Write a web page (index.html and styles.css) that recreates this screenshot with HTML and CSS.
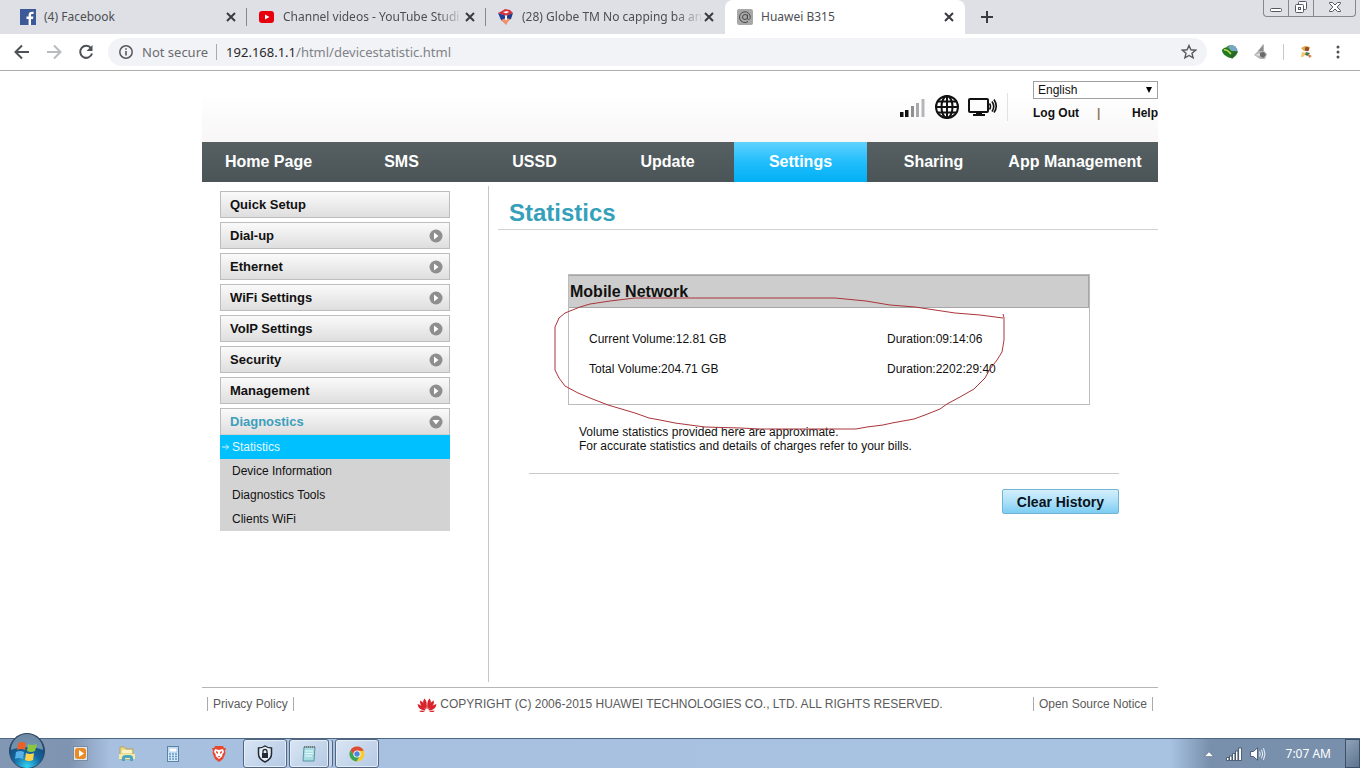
FILE: index.html
```html
<!DOCTYPE html>
<html lang="en">
<head>
<meta charset="utf-8">
<title>Huawei B315</title>
<link rel="stylesheet" href="styles.css">
</head>
<body>
<div class="tabstrip">
  <div class="tab">
    <svg class="favicon" width="16" height="16" viewBox="0 0 16 16"><rect width="16" height="16" fill="#3c5a98"/><path d="M11 16V10h2l.4-2.4H11V6.200c0-.8.4-1.300 1.300-1.300h1.300V2.800c-3-.6-5 .5-5 3.100v1.700H6.500V10h2.100v6z" fill="#fff"/></svg>
    <span class="tab-title">(4) Facebook</span>
    <button class="tab-close" aria-label="Close tab"><svg width="10" height="10" viewBox="0 0 10 10"><path d="M1 1l8 8M9 1l-8 8"/></svg></button>
  </div>
  <div class="tab">
    <svg class="favicon" width="16" height="16" viewBox="0 0 16 16"><rect y="2" width="15" height="12" rx="3" fill="#e8000c"/><path d="M6 5.500v5L10.500 8z" fill="#fff"/></svg>
    <span class="tab-title fade">Channel videos - YouTube Studi</span>
    <button class="tab-close" aria-label="Close tab"><svg width="10" height="10" viewBox="0 0 10 10"><path d="M1 1l8 8M9 1l-8 8"/></svg></button>
  </div>
  <div class="tab">
    <svg class="favicon" width="16" height="16" viewBox="0 0 16 16"><path d="M0 4l4-2 3-2 5 1 3 3-7 3z" fill="#d6303a"/><path d="M0 4l7 2.500L7.500 14 3 11z" fill="#1f3d9a"/><path d="M15 4L9 6.500 9 12l4-2z" fill="#243c86"/><path d="M3 11l5-2 4 1-4 6z" fill="#f0906c"/><path d="M5 3l4-1 2 1-3 1.500z" fill="#fff"/><path d="M7 6.500h2V11H7z" fill="#f4f4fa"/></svg>
    <span class="tab-title fade">(28) Globe TM No capping ba an</span>
    <button class="tab-close" aria-label="Close tab"><svg width="10" height="10" viewBox="0 0 10 10"><path d="M1 1l8 8M9 1l-8 8"/></svg></button>
  </div>
  <div class="tab tab-active">
    <svg class="favicon" width="16" height="16" viewBox="0 0 16 16"><rect width="16" height="16" rx="2" fill="#a8a8a8"/><g fill="none" stroke="#484848"><circle cx="8" cy="8" r="2.500"/><path d="M10.500 5.500v4c0 1.500 2.500 1.500 2.800-1A5.400 5.400 0 1 0 11 12.600"/></g></svg>
    <span class="tab-title">Huawei B315</span>
    <button class="tab-close" aria-label="Close tab"><svg width="10" height="10" viewBox="0 0 10 10"><path d="M1 1l8 8M9 1l-8 8"/></svg></button>
  </div>
  <button class="new-tab" aria-label="New tab"><svg width="12" height="12" viewBox="0 0 12 12"><path d="M6 0v12M0 6h12" stroke="#3a3b40" stroke-width="2"/></svg></button>
  <div class="window-controls">
    <button aria-label="Minimize"><svg width="14" height="14" viewBox="0 0 14 14"><rect x="1.500" y="8.500" width="11" height="3" rx="1" fill="#fff" stroke="#555664"/></svg></button>
    <button aria-label="Restore"><svg width="14" height="14" viewBox="0 0 14 14"><g fill="#fff" stroke="#555664"><rect x="4.500" y="1.500" width="8" height="8" rx="1"/><rect x="1.500" y="4.500" width="8" height="8" rx="1"/><rect x="4.500" y="7.500" width="2" height="2"/></g></svg></button>
    <button class="window-close" aria-label="Close"><svg width="14" height="14" viewBox="0 0 14 14"><path d="M1.500 2.500h3L7 5l2.500-2.500h3v1L9.200 7l3.300 3.500v1h-3L7 9l-2.500 2.500h-3v-1L4.800 7 1.500 3.500z" fill="#fff" stroke="#555664"/></svg></button>
  </div>
</div>

<div class="toolbar">
  <button class="tool" aria-label="Back"><svg width="16" height="16" viewBox="0 0 16 16"><path d="M15 8H2M8 1.500L1.500 8 8 14.500" stroke="#4e5155"/></svg></button>
  <button class="tool" aria-label="Forward"><svg width="16" height="16" viewBox="0 0 16 16"><path d="M1 8h13M8 1.500L14.500 8 8 14.500" stroke="#b9bbbe"/></svg></button>
  <button class="tool" aria-label="Reload"><svg width="16" height="16" viewBox="0 0 16 16"><path d="M13 4.200A6 6 0 1 0 14 9.500" stroke="#4e5155"/><path d="M14.500 1v6h-6z" fill="#4e5155" stroke="none"/></svg></button>
  <div class="omnibox">
    <svg width="16" height="16" viewBox="0 0 16 16"><circle cx="8" cy="8" r="6.200" fill="none" stroke="#55585c" stroke-width="1.500"/><path d="M8 7v4.500M8 4.200v1.600" stroke="#55585c" stroke-width="1.600"/></svg>
    <span class="security">Not secure</span>
    <span class="url"><b>192.168.1.1</b>/html/devicestatistic.html</span>
    <button class="star" aria-label="Bookmark"><svg width="16" height="16" viewBox="0 0 16 16"><path d="M8 1.500l1.900 4.300 4.700.4-3.600 3.100 1.100 4.600L8 11.500l-4.100 2.400L5 9.300 1.400 6.200l4.700-.4z" fill="none" stroke="#55585c" stroke-width="1.400"/></svg></button>
  </div>
  <div class="extensions">
    <svg width="18" height="16" viewBox="0 0 18 16"><circle cx="10" cy="7.500" r="6.500" fill="#4d9440"/><path d="M8 1.300a6.500 6.500 0 0 1 8.500 6.200L12 9 8 4z" fill="#7aa6c6"/><path d="M1 6c3-4 6-3 9 1l5 0-4 7C5 13 1 10 1 6z" fill="#207a24"/><path d="M3 6c3-1 4 1 7 4" stroke="#c8dc50" stroke-width="1.500" fill="none"/><path d="M9 12l6-5 2 1-6 7z" fill="#2b6426"/></svg>
    <svg width="16" height="16" viewBox="0 0 16 16"><path d="M10 0l1 1v6l3 3-2 5H7L1 11l4-4z" fill="#b4b4b4"/><path d="M10 2v5H5z" fill="#8a8a8a"/><path d="M6 9l5-1 2 3-3 3-3-2z" fill="#6a6a6a"/><path d="M2 11l5-2v3z" fill="#e0e0e0"/></svg>
    <i class="divider"></i>
    <svg width="16" height="16" viewBox="0 0 16 16"><path d="M3 4l4-2 5 1-1 3-5 1z" fill="#e0aa48"/><circle cx="9" cy="5" r="2.200" fill="#9c4a2c"/><path d="M4 8l5 1-4 4H3z" fill="#f0c868"/><path d="M8 8l4 1-2 3-3-1z" fill="#4a7850"/><path d="M10 10l4 2-3 2z" fill="#d87840"/></svg>
    <button class="tool" aria-label="Menu"><svg width="4" height="16" viewBox="0 0 4 16"><g fill="#4e5155" stroke="none"><circle cx="2" cy="3" r="1.500"/><circle cx="2" cy="8" r="1.500"/><circle cx="2" cy="13" r="1.500"/></g></svg></button>
  </div>
</div>

<div class="page">
  <header class="header">
    <div class="status">
      <svg width="26" height="20" viewBox="0 0 26 20"><path d="M0 15h3.500v5H0zM5 13h3.500v7H5z" fill="#111"/><path d="M11 9h3v11h-3z" fill="#8f8f93"/><path d="M16 6h3v14h-3z" fill="#a9a9ad"/><path d="M21.500 2h3v18h-3z" fill="#b6b6ba"/></svg>
      <svg width="26" height="26" viewBox="0 0 26 26"><g fill="none" stroke="#111" stroke-width="2"><circle cx="13" cy="13" r="11"/><ellipse cx="13" cy="13" rx="5.500" ry="11"/><path d="M13 2v22M2 13h22M4 7.500h18M4 18.500h18"/></g></svg>
      <svg width="30" height="20" viewBox="0 0 30 20"><g fill="none" stroke="#111"><rect x="1" y="2" width="19" height="13" rx="1" stroke-width="2"/><path d="M21.500 6.500q2 3 0 6M24 4.500q3.500 5 0 10M26 2.500q4.500 7 0 13" stroke-width="1.600"/></g><path d="M8 15h6v2h3v2H5v-2h3z" fill="#111"/></svg>
    </div>
    <div class="account">
      <label class="language"><select aria-label="Language"><option>English</option></select></label>
      <div class="account-links"><a href="#">Log Out</a><span class="bar">|</span><a href="#">Help</a></div>
    </div>
  </header>

  <nav class="nav">
    <a href="#">Home Page</a><a href="#">SMS</a><a href="#">USSD</a><a href="#">Update</a><a href="#" class="current">Settings</a><a href="#">Sharing</a><a href="#" class="wide">App Management</a>
  </nav>

  <div class="body">
    <aside class="sidebar">
      <a class="menu" href="#">Quick Setup</a>
      <a class="menu" href="#">Dial-up<svg class="arrow" width="14" height="14" viewBox="0 0 14 14"><circle cx="7" cy="7" r="6.500"/><path d="M5 3.500v7L9.500 7z"/></svg></a>
      <a class="menu" href="#">Ethernet<svg class="arrow" width="14" height="14" viewBox="0 0 14 14"><circle cx="7" cy="7" r="6.500"/><path d="M5 3.500v7L9.500 7z"/></svg></a>
      <a class="menu" href="#">WiFi Settings<svg class="arrow" width="14" height="14" viewBox="0 0 14 14"><circle cx="7" cy="7" r="6.500"/><path d="M5 3.500v7L9.500 7z"/></svg></a>
      <a class="menu" href="#">VoIP Settings<svg class="arrow" width="14" height="14" viewBox="0 0 14 14"><circle cx="7" cy="7" r="6.500"/><path d="M5 3.500v7L9.500 7z"/></svg></a>
      <a class="menu" href="#">Security<svg class="arrow" width="14" height="14" viewBox="0 0 14 14"><circle cx="7" cy="7" r="6.500"/><path d="M5 3.500v7L9.500 7z"/></svg></a>
      <a class="menu" href="#">Management<svg class="arrow" width="14" height="14" viewBox="0 0 14 14"><circle cx="7" cy="7" r="6.500"/><path d="M5 3.500v7L9.500 7z"/></svg></a>
      <div class="group">
        <a class="menu open" href="#">Diagnostics<svg class="arrow" width="14" height="14" viewBox="0 0 14 14"><circle cx="7" cy="7" r="6.500"/><path d="M3.500 5h7L7 9.500z"/></svg></a>
        <div class="submenu">
          <a href="#" class="selected"><svg width="8" height="8" viewBox="0 0 8 8"><path d="M0 4h6.500M4 1.500L6.500 4 4 6.500" fill="none" stroke="#d8f4ff"/></svg>Statistics</a>
          <a href="#">Device Information</a>
          <a href="#">Diagnostics Tools</a>
          <a href="#">Clients WiFi</a>
        </div>
      </div>
    </aside>

    <main class="content">
      <h1>Statistics</h1>
      <section class="panel">
        <h2>Mobile Network</h2>
        <table>
          <tr><td>Current Volume:12.81 GB</td><td>Duration:09:14:06</td></tr>
          <tr><td>Total Volume:204.71 GB</td><td>Duration:2202:29:40</td></tr>
        </table>
        <svg class="pen" width="452" height="136" viewBox="554 296 452 136"><path d="M1003 314l1 4v22l-2 12-5 8-7 9-5 9-11 11-14 8-13 7-7 5-15 6-11 4-22 4-9 2-16 2-11 2h-96l-20-1-35-1-15-2-15-2-15-3-11-2-14-5-27-8-18-7-12-5-13-7-6-8-4-8v-43l4-9 6-5 15-6 10-3 20-3 25-3h200l31 3 24 4 25 2 20 3 20 3 25 2 23 3"/></svg>
      </section>
      <p class="note">Volume statistics provided here are approximate.<br>For accurate statistics and details of charges refer to your bills.</p>
      <div class="actions"><button class="clear">Clear History</button></div>
    </main>
  </div>

  <footer class="footer">
    <a href="#">Privacy Policy</a>
    <span class="copyright"><svg width="20" height="16" viewBox="0 0 20 16"><g fill="#d8232a"><path d="M9.600 12C6 9 5 4.500 7.500 1.500 9.800 4 10 7 9.600 12z"/><path d="M10.400 12C10 7 10.200 4 12.500 1.500c2.500 3 1.500 7.500-2.100 10.500z"/><path d="M9 12.200C5 11 2.300 7 3.300 3.500 6.500 5 8.500 8.500 9 12.200z"/><path d="M11 12.200c.5-3.700 2.500-7.200 5.700-8.700 1 3.500-1.700 7.500-5.700 8.700z"/><path d="M8.500 13C4 13.500.8 11 .6 7 4 8 7.500 10 8.500 13z"/><path d="M11.500 13c1-3 4.500-5 7.900-6-.2 4-3.400 6.500-7.900 6z"/><path d="M8.500 13.500c-2 2-5 2-6.500.2zM11.500 13.500c2 2 5 2 6.500.2z"/></g></svg>COPYRIGHT (C) 2006-2015 HUAWEI TECHNOLOGIES CO., LTD. ALL RIGHTS RESERVED.</span>
    <a href="#">Open Source Notice</a>
  </footer>
</div>

<div class="taskbar">
  <button class="orb" aria-label="Start"><svg width="38" height="38" viewBox="0 0 38 38"><defs><radialGradient id="orb" cx=".5" cy=".95" r=".9"><stop offset="0" stop-color="#35d4f4"/><stop offset=".45" stop-color="#1467a0"/><stop offset="1" stop-color="#173a60"/></radialGradient></defs><circle cx="19" cy="19" r="17.500" fill="url(#orb)" stroke="#2d4763"/><path d="M3 18a16 16 0 0 1 32 0c-9-4-23-4-32 0z" fill="#b9cbd8" opacity=".55"/><path d="M10 11q4-2 8 0l-1 7q-4-2-8 0z" fill="#e8622c"/><path d="M20 12q4 2 9 0l-2 7q-4 2-8 0z" fill="#8cc63e"/><path d="M8 20q4-2 8 0l-1 7q-4-2-8 0z" fill="#58b2e8"/><path d="M18 21q4 2 8 0l-1 7q-4 2-8 0z" fill="#ffd24a"/></svg></button>
  <div class="pinned">
    <svg width="18" height="18" viewBox="0 0 18 18"><rect x="1.500" y="1.500" width="14" height="14" fill="#dde6ee" stroke="#7b8ca0"/><rect x="3" y="3" width="11" height="11" rx="3" fill="#e98a24"/><path d="M7 5v7l5-3.500z" fill="#fff"/></svg>
    <svg width="18" height="18" viewBox="0 0 18 18"><path d="M2 2h5l1 2h7v10H2z" fill="#e8d98b" stroke="#b7a75c"/><path d="M4 5h10v3H4z" fill="#f8f3cc"/><path d="M1 9h16v5H1z" fill="#f4eaa6"/><path d="M4 16v-3q0-3 4-3h3q4 0 4 3v3h-3v-3H7v3z" fill="#4ca4c4"/></svg>
    <svg width="18" height="18" viewBox="0 0 18 18"><rect x="3.500" y="1.500" width="11" height="15" fill="#d5e8f6" stroke="#5b83a8"/><rect x="5" y="3" width="8" height="4" fill="#fff" stroke="#86b3d5" stroke-width=".6"/><path d="M5 9h8M5 11.500h8M5 14h8" stroke="#6398c4" stroke-width="1.500" stroke-dasharray="2 1"/></svg>
    <svg width="18" height="18" viewBox="0 0 18 18"><path d="M5 1h8l1 2h2l-1 3 .5 2-2.500 6-4 3-4-3L2.500 8 3 6 2 3h2z" fill="#e6492f"/><path d="M5 4l4 1 4-1 1 3-2 3 .5 1-3.500 3-3.500-3 .5-1-2-3z" fill="#fff"/><path d="M6 6l2 1v2L6 7.500zM12 6l-2 1v2l2-1.500zM7.500 11h3L9 12.500z" fill="#e6492f"/></svg>
  </div>
  <button class="task" aria-label="VPN"><svg width="18" height="18" viewBox="0 0 18 18"><path d="M9 1q3 2 6.500 2v6q0 5-6.500 8-6.500-3-6.500-8V3Q6 3 9 1z" fill="#e8eef5" stroke="#222b36" stroke-width="1.500"/><rect x="6" y="8" width="6" height="5" fill="#222b36"/><path d="M7 8V6.500a2 2 0 0 1 4 0V8" fill="none" stroke="#222b36" stroke-width="1.300"/></svg></button>
  <button class="task stacked" aria-label="Notepad"><svg width="18" height="18" viewBox="0 0 18 18"><path d="M4 2h11l-1 14H3z" fill="#a9dde4" stroke="#57949f"/><path d="M5 6h8M5 8.500h8M5 11h7" stroke="#e8fbff"/><path d="M4 2h11" stroke="#777" stroke-width="2" stroke-dasharray="1 1"/></svg></button>
  <button class="task" aria-label="Chrome"><svg width="16" height="16" viewBox="0 0 16 16"><circle cx="8" cy="8" r="7.500" fill="#f7cb36"/><path d="M1.500 4.200A7.500 7.500 0 0 1 14.800 4.800H8L5 9.500z" fill="#dc4a3a"/><path d="M1.500 4.200A7.500 7.500 0 0 0 7.500 15.500l3.300-5.500L5 9.500z" fill="#37a55a"/><circle cx="8" cy="8" r="3.600" fill="#fff"/><circle cx="8" cy="8" r="2.700" fill="#4a86e0"/></svg></button>
  <div class="tray">
    <svg width="10" height="6" viewBox="0 0 10 6"><path d="M.5 5.500h9L5 .8z" fill="#fff" stroke="#5d7086" stroke-width=".6"/></svg>
    <svg width="16" height="14" viewBox="0 0 16 14"><g fill="#fff" stroke="#34465a" stroke-width=".8"><path d="M.5 10.500h2.400v3H.5zM3.500 9h2.400v4.500H3.500zM6.500 6.500h2.400v7H6.500zM9.500 4h2.400v9.500H9.500zM12.600 1h2.900v12.500h-2.900z"/></g></svg>
    <svg width="16" height="14" viewBox="0 0 16 14"><path d="M.6 4.500h2.900L7.500.8v12.400L3.500 9.500H.6z" fill="#fff" stroke="#34465a" stroke-width=".8"/><path d="M9.500 4.500q1.500 2.500 0 5M11.500 2.800q2.500 4.200 0 8.400M13.500 1.200q3 5.800 0 11.600" fill="none" stroke="#eef4fa"/></svg>
    <time>7:07 AM</time>
  </div>
  <button class="show-desktop" aria-label="Show desktop"></button>
</div>
</body>
</html>
```
FILE: styles.css
```css
* { box-sizing: border-box; }
body {
  margin: 0;
  min-height: 100vh;
  display: flex;
  flex-direction: column;
  background: #fff;
  color: #111;
  font: 12px/14px "Liberation Sans", Arial, sans-serif;
}
button { margin: 0; padding: 0; border: 0; background: none; color: inherit; font: inherit; }
a { color: inherit; text-decoration: none; }
svg { display: block; flex: none; }

/* Browser tabs */
.tabstrip {
  display: flex;
  height: 34px;
  padding-left: 8px;
  background: #dfe0e6;
  font: 12px/16px "Noto Sans", "Open Sans", sans-serif;
  color: #4c4e53;
}
.tab {
  display: flex;
  align-items: center;
  justify-content: space-between;
  gap: 8px;
  width: 239px;
  padding: 0 11px 0 12px;
  background: linear-gradient(#888, #888) right center / 1px 18px no-repeat;
}
.tab:nth-child(3) { background: none; }
.tab-active { width: 240px; border-radius: 8px 8px 0 0; background: #fff; }
.tab-title { flex: 1; white-space: nowrap; }
.fade {
  margin-right: -8px;
  -webkit-mask-image: linear-gradient(90deg, #000 84%, transparent);
  mask-image: linear-gradient(90deg, #000 84%, transparent);
}
.tab-close svg { fill: none; stroke: #3a3b40; stroke-width: 2; }
.new-tab { padding: 0 16px; }
.window-controls {
  display: flex;
  height: 17px;
  margin: 0 4px 0 auto;
  border: 1px solid #85868e;
  border-top: 0;
  border-radius: 0 0 4px 4px;
}
.window-controls button { display: flex; justify-content: center; width: 25px; border-right: 1px solid #85868e; }
.window-controls .window-close { width: 41px; border-right: 0; }

/* Address bar */
.toolbar {
  display: flex;
  align-items: center;
  height: 37px;
  padding: 0 20px 0 14px;
  border-bottom: 1px solid #adadad;
  background: #fff;
  font: 13px/20px "Noto Sans", "Open Sans", sans-serif;
}
.tool { margin-right: 16px; }
.tool svg { fill: none; stroke-width: 2; }
.omnibox {
  flex: 1;
  display: flex;
  align-items: center;
  height: 28px;
  margin-left: -2px;
  padding: 0 10px;
  border-radius: 14px;
  background: #f2f3f6;
}
.security { margin-left: 8px; padding-right: 8px; border-right: 1px solid #aaa; line-height: 16px; color: #6a6c70; }
.url { margin-left: 9px; color: #808287; }
.url b { font-weight: 400; color: #26272a; }
.star { margin-left: auto; }
.extensions { display: flex; align-items: center; gap: 14px; margin-left: 14px; }
.extensions .tool { margin: 0 0 0 8px; }
.divider { width: 1px; height: 16px; background: #c8c8c8; }

/* Router page */
.page {
  flex: 1;
  display: flex;
  flex-direction: column;
  width: 100%;
  max-width: 956px;
  margin: 0 auto;
}
.header {
  display: flex;
  justify-content: flex-end;
  height: 71px;
  padding-top: 10px;
  background: linear-gradient(#fff 30%, #f8f6f6);
}
.status {
  display: flex;
  align-items: center;
  gap: 8px;
  height: 28px;
  margin-top: 12px;
  padding-right: 9px;
  border-right: 1px solid #e2e2e2;
}
.account { width: 125px; margin-left: 25px; }
.language { display: block; position: relative; }
.language select {
  display: block;
  width: 100%;
  height: 18px;
  padding: 0 4px;
  border: 1px solid #a0a0a0;
  border-radius: 0;
  appearance: none;
  background: #fff;
  color: #111;
  font: inherit;
}
.language::after {
  content: "";
  position: absolute;
  right: 6px;
  top: 6px;
  border: 3px solid transparent;
  border-top: 6px solid #000;
  border-bottom: 0;
}
.account-links { display: flex; margin-top: 7px; font-weight: 700; }
.account-links a:last-child { margin-left: auto; }
.bar { margin-left: 18px; color: #8a7d50; }

.nav {
  display: grid;
  grid-template-columns: repeat(6, 133px) 1fr;
  height: 40px;
  background: linear-gradient(#566063, #4b5557);
  color: #fff;
  font: 700 16px/40px "Liberation Sans", Arial, sans-serif;
  text-align: center;
}
.nav .current { background: linear-gradient(#5fd2ff, #22bdfb 50%, #00b0f5); }
.nav .wide { padding-right: 8px; }

.body { flex: 1; display: flex; padding: 4px 0 5px; }
.sidebar {
  display: flex;
  flex-direction: column;
  gap: 4px;
  width: 287px;
  padding: 5px 38px 0 18px;
  border-right: 1px solid #c6c6c6;
}
.menu {
  display: flex;
  align-items: center;
  justify-content: space-between;
  height: 27px;
  padding: 0 6px 0 9px;
  border: 1px solid #bdbdbd;
  background: linear-gradient(#fafafa, #dedede);
  font-size: 13px;
  font-weight: 700;
}
.menu.open { color: #3d9fbb; border-bottom-color: #d0d0d0; }
.arrow { fill: #8e8e8e; }
.arrow path { fill: #fff; }
.submenu { background: #d3d3d3; }
.submenu a { display: flex; align-items: center; height: 24px; padding-left: 12px; }
.submenu .selected { gap: 2px; padding-left: 2px; background: #00c0ff; color: #e6f8ff; }

.content { flex: 1; min-width: 0; padding-left: 9px; }
h1 {
  margin: 0;
  height: 44px;
  padding: 8px 0 0 11px;
  border-bottom: 1px solid #d2d2d2;
  color: #35a0ba;
  font-size: 24px;
  line-height: 38px;
}
.panel { position: relative; margin: 44px 68px 0 70px; border: 1px solid #bcbcbc; }
h2 {
  margin: 0;
  padding: 0 1px;
  border: 1px solid #a6a6a6;
  border-width: 1px 1px 1px 0;
  background: #cdcdcd;
  font-size: 16px;
  line-height: 31px;
}
table { width: 100%; margin: 16px 0 20px; border-collapse: collapse; }
td { height: 30px; padding: 0 0 0 20px; }
td:last-child { width: 222px; }
.pen { position: absolute; left: -15px; top: 21px; pointer-events: none; fill: none; stroke: #a9353a; }
.note { margin: 20px 68px 0 81px; }
.actions { margin: 20px 39px 0 31px; padding-top: 15px; border-top: 1px solid #c8c8c8; text-align: right; }
.clear {
  height: 25px;
  padding: 0 14px;
  border: 1px solid #72b4d4;
  border-radius: 2px;
  background: linear-gradient(#d3eefb, #aee0f8 50%, #7ccdf2);
  color: #08131c;
  font-size: 14px;
  font-weight: 700;
}

.footer {
  display: grid;
  grid-template-columns: 1fr auto 1fr;
  height: 51px;
  padding: 9px 5px 0;
  border-top: 1px solid #b5b5b5;
  color: #5b5b5b;
}
.footer a { justify-self: start; height: 14px; padding: 0 5px; border: 1px solid #aaa; border-width: 0 1px; }
.footer a:last-child { justify-self: end; }
.copyright { display: flex; gap: 3px; }

/* Taskbar */
.taskbar {
  display: flex;
  height: 30px;
  padding-left: 8px;
  border-top: 1px solid #4d6783;
  background: linear-gradient(90deg, #8297b4 0, #7f94b0 70px, #a8c0e0 110px, #a8c2e2 1170px, #7890ac 1210px, #7890ac);
}
.orb { height: 38px; margin: -7px 0 -2px; }
.pinned { display: flex; align-items: center; gap: 28px; margin: 0 15px 0 26px; }
.task {
  display: flex;
  align-items: center;
  justify-content: center;
  width: 44px;
  margin-right: 2px;
  border: 1px solid #52677f;
  border-radius: 3px;
  background: linear-gradient(135deg, #d9e5f4, #b4c9e4);
  box-shadow: inset 0 0 0 1px #e4edf8;
}
.stacked { width: 40px; margin-right: 6px; box-shadow: inset 0 0 0 1px #e4edf8, 4px 0 0 -1px #c5d5ea, 5px 0 0 -1px #52677f; }
.tray {
  display: flex;
  align-items: center;
  gap: 8px;
  margin: 0 14px 0 auto;
  color: #fff;
  font: 12px/16px "Noto Sans", "Open Sans", sans-serif;
}
.tray svg:first-child { margin-right: 4px; }
.tray time { margin-left: 12px; }
.show-desktop { width: 15px; border: 1px solid #3e5067; background: linear-gradient(135deg, #8fa2b8, #5d7590); }
```
